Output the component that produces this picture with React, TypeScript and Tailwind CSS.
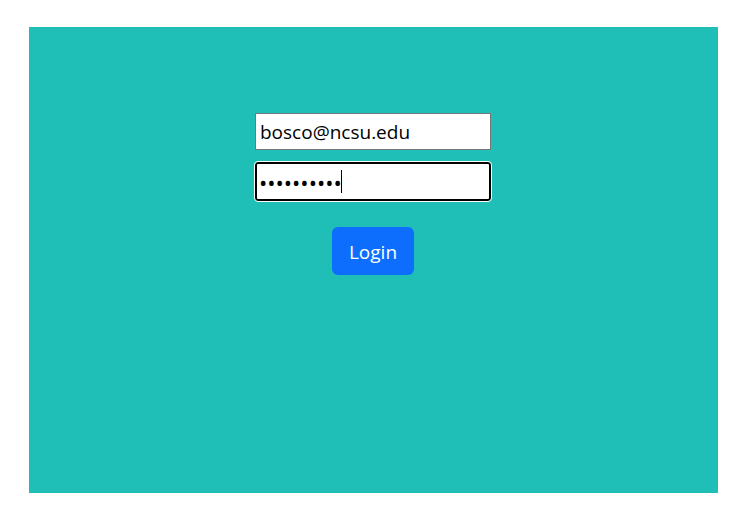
export default function App() {
  return (
    <div className="min-h-[517px] bg-white pt-[27px] pl-[29px] font-['Open_Sans',sans-serif]">
      <div className="w-[689px] h-[466px] bg-[#1fbfb8] flex flex-col items-center pt-[86px] pr-[1px]">
        <form className="flex flex-col items-center" onSubmit={(e) => e.preventDefault()}>
          <input
            type="text"
            defaultValue="bosco@ncsu.edu"
            className="w-[236px] h-[37px] bg-white border border-[#767676] px-[4px] text-[19px] text-black outline-none"
          />
          <div className="relative mt-[12px]">
            <input
              type="password"
              defaultValue="xxxxxxxxxx"
              className="w-[236px] h-[39px] bg-white border-2 border-black rounded-[3px] px-[2px] text-[22px] text-black outline outline-1 outline-white"
            />
            <span className="absolute left-[86px] top-[8px] w-px h-[23px] bg-black" />
          </div>
          <button
            type="submit"
            className="mt-[26px] w-[82px] h-[48px] pt-[2px] rounded-[6px] bg-[#0d6efd] text-white text-[19px]"
          >
            Login
          </button>
        </form>
      </div>
    </div>
  );
}
